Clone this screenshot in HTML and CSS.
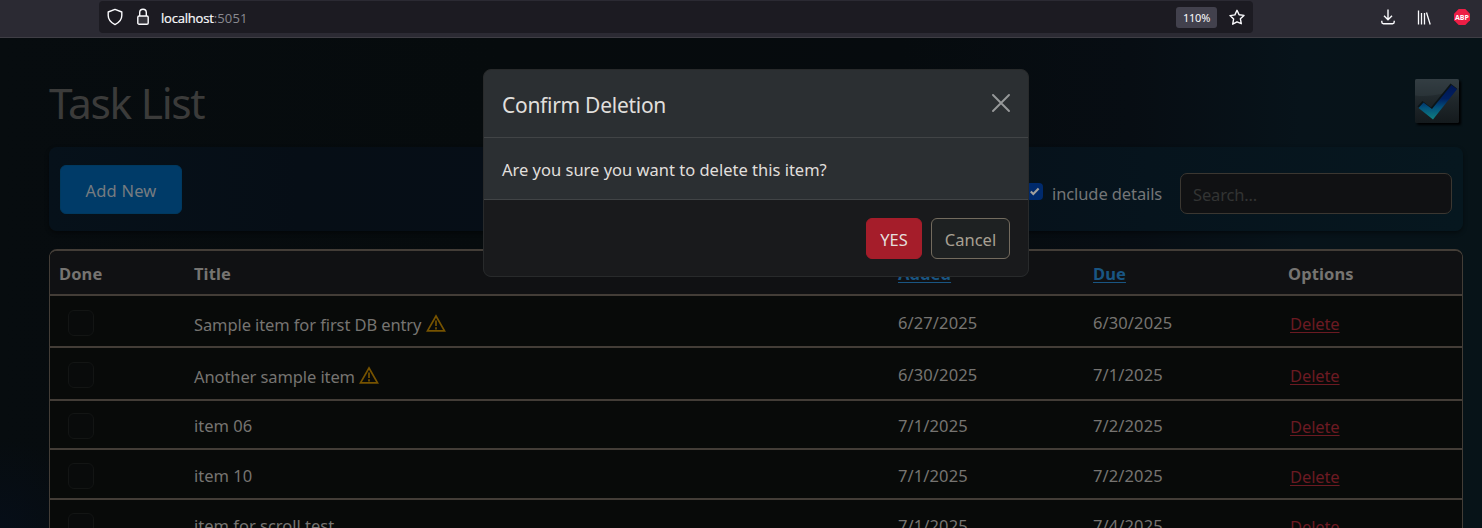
FILE: index.html
```html
<!DOCTYPE html>
<html lang="en">
<head>
<meta charset="utf-8">
<title>Task List</title>
<link rel="stylesheet" href="styles.css">
</head>
<body>
<header class="browser">
  <div class="urlbar">
    <svg class="ic shield" viewBox="0 0 16 18" fill="none" stroke="#fbfbfe" stroke-width="1.4" stroke-linejoin="round"><path d="M8 1.4 14.800 4v3.600c0 3.600-2.600 7-6.800 9-4.200-2-6.800-5.400-6.800-9V4z"/></svg>
    <svg class="ic lock" viewBox="0 0 12 18" fill="none" stroke="#fbfbfe" stroke-width="1.4"><rect x=".8" y="8" width="10.400" height="8.200" rx="1.300" fill="#36353c"/><path d="M2.700 8V4.500a3.300 3.300 0 0 1 6.600 0V8"/></svg>
    <span class="host">localhost</span><span class="port">:5051</span>
    <span class="zoom">110%</span>
    <svg class="ic star" viewBox="0 0 16 17" fill="none" stroke="#fbfbfe" stroke-width="1.4" stroke-linejoin="round"><path d="m8 1.300 2.100 4.500 4.900.6-3.600 3.400.9 4.900L8 12.800l-4.300 2.400.9-5.100L1 6.600l4.900-.7z"/></svg>
  </div>
  <div class="tools">
    <svg class="ic download" viewBox="0 0 14 16" fill="none" stroke="#fbfbfe" stroke-width="1.4"><path d="M7 .5v10M3 6.700l4 4 4-4M.8 11.800v1.300q0 1.600 1.600 1.600h9.200q1.600 0 1.600-1.600v-1.300"/></svg>
    <svg class="ic books" viewBox="0 0 14 15" fill="none" stroke="#fbfbfe" stroke-width="1.300"><path d="M1.500.5v14M4.500 3v11.500M7.500 3v11.500M9.500 2.500l3.700 12"/></svg>
    <svg class="ic abp" viewBox="0 0 16 16"><path d="M4.700 0h6.600L16 4.700v6.600L11.300 16H4.700L0 11.300V4.700z" fill="#ed1e45"/><text x="8" y="10.600" text-anchor="middle" fill="#fff" class="abp-text">ABP</text></svg>
  </div>
</header>
<main class="page">
  <div class="heading">
    <h1>Task List</h1>
    <svg class="logo" viewBox="0 0 46 46">
      <defs>
        <linearGradient id="tile" x1="0" y1="0" x2="0" y2="1"><stop offset="0" stop-color="#303a3f"/><stop offset=".45" stop-color="#20282c"/><stop offset="1" stop-color="#141a1d"/></linearGradient>
        <linearGradient id="tick" x1="0" y1="0" x2="0" y2="1"><stop offset="0" stop-color="#001552"/><stop offset=".4" stop-color="#002060"/><stop offset=".65" stop-color="#03507a"/><stop offset="1" stop-color="#108080"/></linearGradient>
      </defs>
      <rect width="44" height="44" rx="1.500" fill="url(#tile)"/>
      <path d="M0 16.500Q22 19 44 9V1.500Q44 0 42.500 0h-41Q0 0 0 1.500z" fill="#39454a" opacity=".35"/>
      <path d="m2.500 27.500 5-5.500 8.500 6.500L35.500 4.500l6.500 5L18 40z" fill="#0b1418"/>
      <path d="m3.500 29 5-5.500 8.500 6.500L36.500 6l5.500 4.200L18 40.500z" fill="url(#tick)"/>
    </svg>
  </div>
  <section class="toolbar">
    <button class="add">Add New</button>
    <div class="filters">
      <span class="check"><svg viewBox="0 0 17 17" fill="none" stroke="#a3a19d" stroke-width="2.100"><path d="m4.800 8.500 2.500 2.500 5.300-5.500"/></svg></span>
      <span class="details">include details</span>
      <div class="search"><span>Search...</span></div>
    </div>
  </section>
  <section class="table">
    <div class="row head"><span>Done</span><span>Title</span><span><a class="sort">Added</a></span><span><a class="sort">Due</a></span><span>Options</span></div>
    <div class="row tall"><i class="box"></i><span class="t low">Sample item for first DB entry <svg class="warn" viewBox="0 0 20 18"><path d="M10 2 18.500 16.800H1.500z"/><path d="M10 6.500v5.500M10 13.200v2.200"/></svg></span><span class="t date">6/27/2025</span><span class="t date">6/30/2025</span><a class="t del">Delete</a></div>
    <div class="row second"><i class="box"></i><span class="t low">Another sample item <svg class="warn" viewBox="0 0 20 18"><path d="M10 2 18.500 16.800H1.500z"/><path d="M10 6.500v5.500M10 13.200v2.200"/></svg></span><span class="t date">6/30/2025</span><span class="t date">7/1/2025</span><a class="t del">Delete</a></div>
    <div class="row third"><i class="box"></i><span class="t">item 06</span><span class="t date">7/1/2025</span><span class="t date">7/2/2025</span><a class="t del">Delete</a></div>
    <div class="row"><i class="box"></i><span class="t">item 10</span><span class="t date">7/1/2025</span><span class="t date">7/2/2025</span><a class="t del">Delete</a></div>
    <div class="row"><i class="box"></i><span class="t">item for scroll test</span><span class="t date">7/1/2025</span><span class="t date">7/4/2025</span><a class="t del">Delete</a></div>
  </section>
</main>
<div class="modal" role="dialog">
  <div class="modal-header"><h2>Confirm Deletion</h2><svg class="close" viewBox="0 0 18 18" fill="none" stroke="#97999a" stroke-width="1.900" stroke-linecap="round"><path d="m1 1 16 16M17 1 1 17"/></svg></div>
  <div class="modal-body"><span>Are you sure you want to delete this item?</span></div>
  <div class="modal-footer"><button class="btn yes">YES</button><button class="btn cancel">Cancel</button></div>
</div>
</body>
</html>
```
FILE: styles.css
```css
* { box-sizing: border-box; }
body {
  margin: 0;
  height: 528px;
  overflow: hidden;
  position: relative;
  font-family: "Noto Sans", "Open Sans", sans-serif;
  font-size: 16.5px;
  color: #767471;
  background: #070c0f;
}
h1, h2 { margin: 0; font-weight: 400; }
svg { display: block; flex: none; }
button { font: inherit; cursor: pointer; }

.browser {
  height: 38px;
  padding: 1px 0 4px 99px;
  display: flex;
  align-items: flex-start;
  background: #2b2a33;
  border-bottom: 1px solid #3f3e45;
}
.urlbar {
  width: 1154px;
  height: 32px;
  padding: 0 8px;
  display: flex;
  align-items: center;
  border-radius: 4px;
  background: #1c1b22;
  font-size: 13px;
  color: #fbfbfe;
}
.shield { width: 16px; height: 18px; }
.lock { width: 12px; height: 18px; margin: 0 12px 0 14px; }
.host, .port { font-family: "Open Sans", sans-serif; padding-top: 2px; }
.host { letter-spacing: -.2px; -webkit-text-stroke: .2px #fbfbfe; }
.port { color: #8a8990; letter-spacing: .15px; }
.zoom {
  margin-left: auto;
  width: 41px;
  height: 21px;
  line-height: 21px;
  text-align: center;
  border-radius: 3px;
  background: #42414d;
  font-size: 11px;
  letter-spacing: -.2px;
}
.star { width: 16px; height: 17px; margin-left: 12px; }
.tools { display: flex; align-items: center; height: 32px; margin-left: 128px; }
.download { width: 14px; height: 16px; }
.books { width: 14px; height: 15px; margin: 0 23px 0 22px; }
.abp { width: 16px; height: 16px; }
.abp-text { font: 700 7px "Open Sans", sans-serif; }

.page {
  height: 490px;
  padding: 0 19px 0 49px;
  overflow: hidden;
  background:
    radial-gradient(ellipse 90px 90px at 0 490px, #060e18, transparent),
    linear-gradient(90deg, #070c0f 0, #060b0d 500px, #060b0e 900px, #070d13 1130px, #07131a 1300px, #071318 100%);
}
.heading {
  height: 109px;
  display: flex;
  justify-content: space-between;
  align-items: flex-start;
}
h1 { font-size: 42.5px; line-height: 60px; padding-top: 35px; color: #3b3b3a; letter-spacing: -1.3px; }
.logo { width: 46px; height: 46px; margin: 41px 2px 0 0; filter: drop-shadow(2px 2px 1px #000); }

.toolbar {
  height: 84px;
  padding: 0 11px;
  display: flex;
  justify-content: space-between;
  align-items: center;
  border-radius: 8px;
  background: linear-gradient(90deg, #06111a 0, #060e16 250px, #060e18 700px, #06141d 1100px, #06171f 100%);
  box-shadow: 0 2px 4px rgba(0, 0, 0, .45);
}
.add {
  width: 122px;
  height: 49px;
  padding: 2px 0 0;
  border: 1px solid #00395f;
  border-radius: 6px;
  background: #003b68;
  color: #767b80;
  letter-spacing: .2px;
}
.filters { display: flex; align-items: center; padding-top: 9px; }
.check { width: 17px; height: 17px; margin: -4px 9px 0 0; border-radius: 4px; background: #002a6c; }
.details { width: 128px; color: #747677; white-space: nowrap; letter-spacing: -.1px; }
.search {
  width: 272px;
  height: 41px;
  padding: 2px 12px 0;
  display: flex;
  align-items: center;
  border: 1px solid #3b3731;
  border-radius: 7px;
  background: #101113;
  color: #333433;
  letter-spacing: -.15px;
}

.table {
  margin-top: 18px;
  border: 1px solid #433d37;
  border-width: 2px 1px;
  border-radius: 8px 8px 0 0;
  background: #080a09;
  overflow: hidden;
}
.row {
  height: 50px;
  padding-left: 9px;
  display: grid;
  grid-template-columns: 135px 704px 195px 195px 1fr;
  align-items: center;
  border-bottom: 2px solid #433d37;
}
.head { height: 45px; background: #101113; font-weight: 700; letter-spacing: .1px; }
.head span { padding-top: 2px; }
.sort { color: #195582; text-decoration: underline; text-underline-offset: 2px; text-decoration-thickness: 1px; }
.box { width: 26px; height: 26px; margin: 3px 0 0 9px; border: 1px solid #131514; border-radius: 6px; background: #090b0b; }
.row .t { padding-top: 3px; }
.row .date { letter-spacing: .1px; }
.row .low { padding-top: 7px; letter-spacing: -.1px; }
.row .del { color: #6b1a22; padding: 5px 0 0 2px; text-decoration: underline; text-underline-offset: 2px; text-decoration-thickness: 1px; letter-spacing: -.1px; }
.tall { height: 52px; }
.second { height: 53px; }
.third { height: 49px; }
.second .t, .third .t { margin-bottom: 2px; }
.warn { display: inline-block; width: 20px; height: 18px; vertical-align: -1px; fill: none; stroke: #765300; stroke-width: 1.700; }

.modal {
  position: absolute;
  left: 483px;
  top: 69px;
  width: 546px;
  height: 208px;
  border: 1px solid #282a2b;
  border-radius: 8px;
  overflow: hidden;
  background: #2b2f32;
  color: #e0dfdc;
}
.modal-header {
  height: 68px;
  padding: 0 18px;
  display: flex;
  align-items: center;
  justify-content: space-between;
  border-bottom: 1px solid #414446;
}
h2 { font-size: 21px; padding-top: 2px; letter-spacing: -.28px; }
.close { width: 18px; height: 18px; margin-bottom: 1px; }
.modal-body { height: 62px; padding: 1px 18px 0; display: flex; align-items: center; border-bottom: 1px solid #414446; }
.modal-footer { height: 76px; padding: 18px 18px 0 0; display: flex; justify-content: flex-end; gap: 9px; background: #191a1c; }
.btn { height: 41px; padding: 1px 0 0; border-radius: 6px; border: 1px solid; }
.yes { width: 56px; background: #a51d2a; border-color: #a51d2a; color: #e4dfdc; }
.cancel { width: 79px; background: #1e2122; border-color: #736b5e; color: #a8a093; }
```
